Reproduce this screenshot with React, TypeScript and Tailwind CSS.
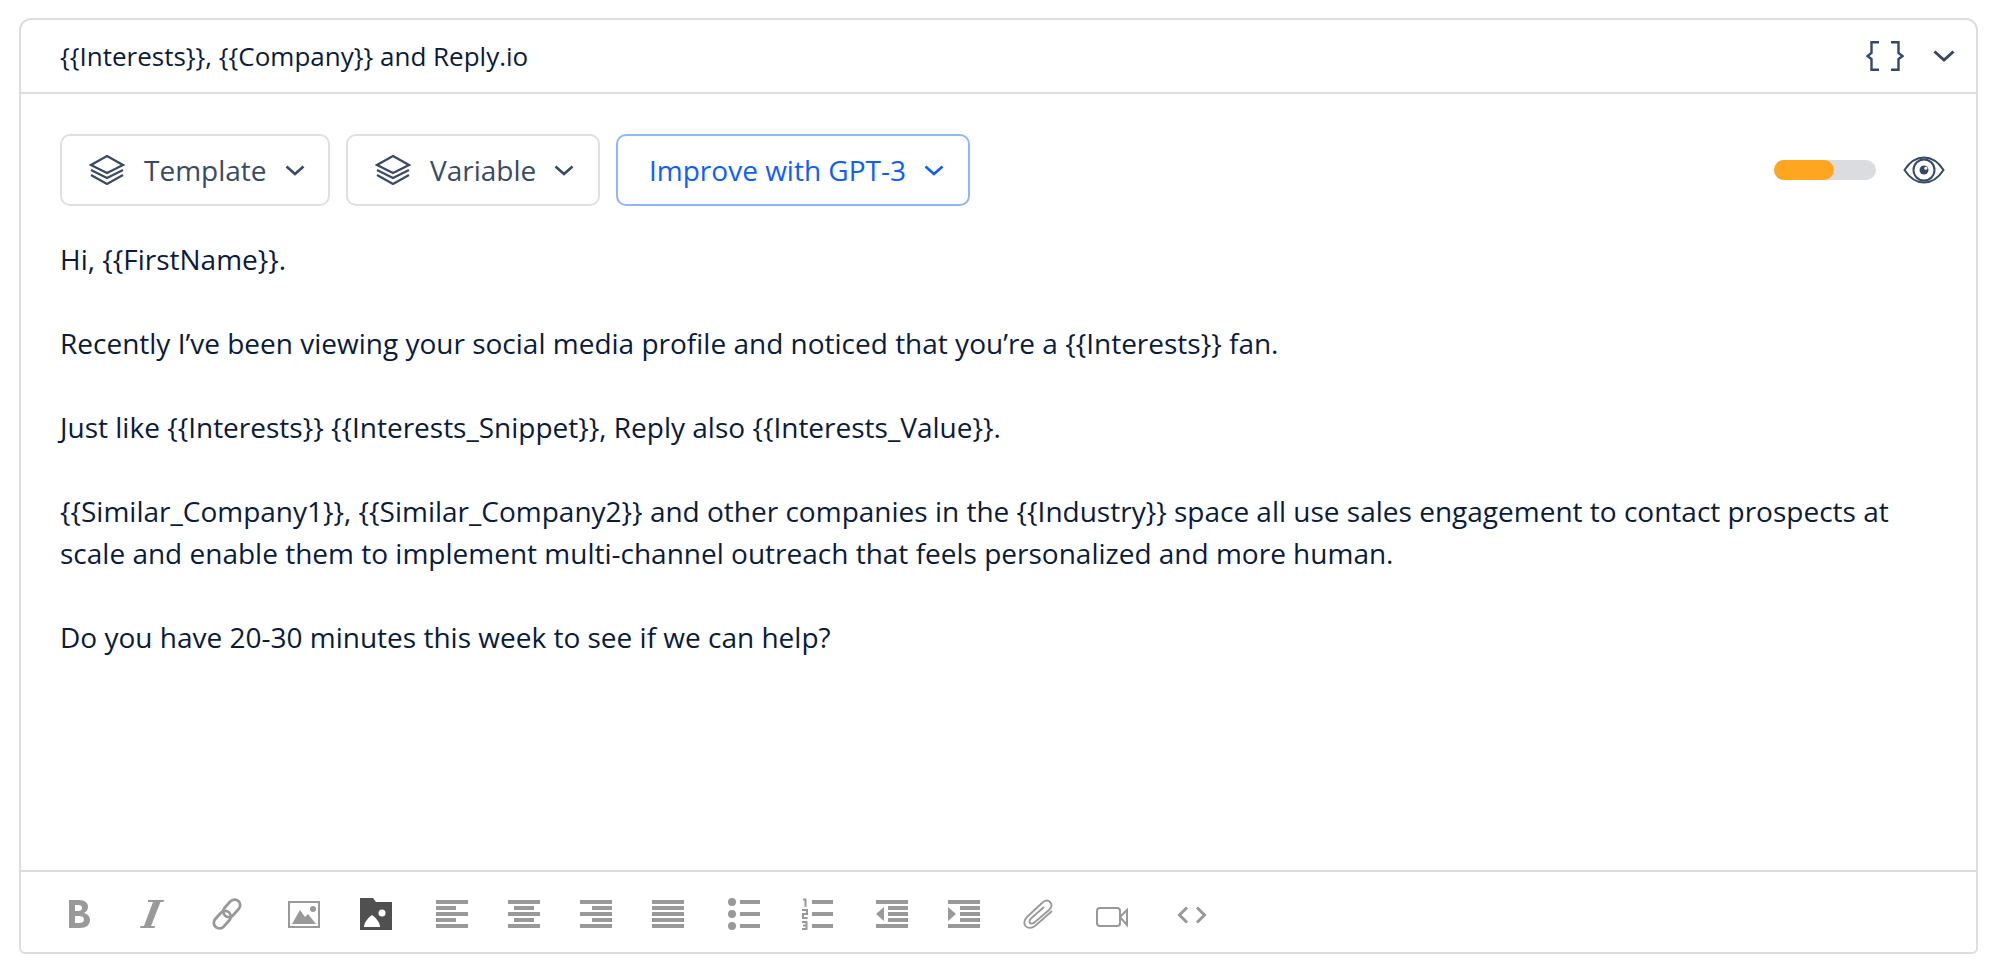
const TEXT_FONT = "font-['Open_Sans',sans-serif]";

function LayersIcon() {
  return (
    <svg width="36" height="30" viewBox="0 0 36 30" fill="none" stroke="currentColor" strokeWidth="2.2" className="shrink-0">
      <path d="M18 1 L34 10 L18 18 L2 10 Z" />
      <path d="M2 15 L18 23 L34 15" />
      <path d="M2 20 L18 29 L34 20" />
    </svg>
  );
}

function Chevron({ className = '' }: { className?: string }) {
  return (
    <svg width="22" height="12" viewBox="0 0 22 12" fill="none" stroke="currentColor" strokeWidth="3" className={className}>
      <path d="M1.5 1.5 L11 10 L20.5 1.5" />
    </svg>
  );
}

function SmallChevron({ className = '' }: { className?: string }) {
  return (
    <svg width="20" height="11" viewBox="0 0 20 11" fill="none" stroke="currentColor" strokeWidth="2.6" className={`shrink-0 ${className}`}>
      <path d="M1.5 1.5 L10 9 L18.5 1.5" />
    </svg>
  );
}

function Braces() {
  return (
    <svg width="38" height="30" viewBox="0 0 38 30" fill="none" stroke="currentColor" strokeWidth="2.4">
      <path d="M13 1.2 H5.500 V12 L1.500 15 L5.500 18 V28.800 H13" />
      <path d="M25 1.200 H32.500 V12 L36.500 15 L32.500 18 V28.800 H25" />
    </svg>
  );
}

function Eye() {
  return (
    <svg width="42" height="28" viewBox="0 0 42 28" fill="none" stroke="#354864" strokeWidth="2">
      <path d="M1.500 14 C8 4 14 1.500 21 1.500 C28 1.500 34 4 40.500 14 C34 24 28 26.500 21 26.500 C14 26.500 8 24 1.500 14 Z" />
      <circle cx="21" cy="14" r="10.500" />
      <circle cx="21" cy="14" r="4.500" fill="#354864" stroke="none" />
      <circle cx="22.800" cy="12.200" r="1.500" fill="#fff" stroke="none" />
    </svg>
  );
}

function Bars({ rows }: { rows: [number, number][] }) {
  return (
    <svg width="32" height="28" viewBox="0 0 32 28" fill="#999">
      {rows.map(([x, w], i) => (
        <rect key={i} x={x} y={i * 6} width={w} height="4" />
      ))}
    </svg>
  );
}

const ICONS: { ml: string; node: React.ReactNode }[] = [
  {
    ml: 'ml-0',
    node: (
      <svg width="32" height="32" viewBox="0 0 32 32" fill="#999">
        <path fillRule="evenodd" d="M6 2 H16 C22 2 25 5 25 9 C25 12 23 14 21 15 C24 16 27 18 27 22 C27 27 23 30 17 30 H6 Z M12 7 V13 H15 C18 13 19 12 19 10 C19 8 18 7 15 7 Z M12 18 V25 H16 C19 25 21 24 21 21.500 C21 19 19 18 16 18 Z" />
      </svg>
    ),
  },
  {
    ml: 'ml-[41px]',
    node: (
      <svg width="32" height="32" viewBox="0 0 32 32" fill="#999">
        <path d="M12 2 H28 L27.500 4 H24.500 L15 28 H19 L18.500 30 H4 L4.500 28 H8 L17 4 H12 Z" />
      </svg>
    ),
  },
  {
    ml: 'ml-[43px]',
    node: (
      <svg width="34" height="34" viewBox="0 0 34 34" fill="none" stroke="#999" strokeWidth="3">
        <rect x="16" y="0.500" width="12" height="21" rx="6" transform="rotate(42 22 11)" />
        <rect x="6" y="12.500" width="12" height="21" rx="6" transform="rotate(42 12 23)" />
      </svg>
    ),
  },
  {
    ml: 'ml-[45px]',
    node: (
      <svg width="32" height="32" viewBox="0 0 32 32">
        <rect x="1" y="4" width="30" height="25" fill="none" stroke="#999" strokeWidth="2" />
        <path d="M4 26 L12 12 L17 19 L20 16 L28 26 Z" fill="#999" />
        <circle cx="25" cy="11" r="3" fill="#999" />
      </svg>
    ),
  },
  {
    ml: 'ml-[40px]',
    node: (
      <svg width="32" height="32" viewBox="0 0 32 32">
        <path d="M0 0 H13 L16 4 H32 V32 H0 Z" fill="#505050" />
        <path d="M4 29 C4 24 9 19 12 17 C15 19 20 24 20 29 Z" fill="#fff" />
        <circle cx="22" cy="15" r="3.500" fill="#fff" />
      </svg>
    ),
  },
  { ml: 'ml-[44px]', node: <Bars rows={[[0, 32], [0, 20], [0, 32], [0, 20], [0, 32]]} /> },
  { ml: 'ml-[40px]', node: <Bars rows={[[0, 32], [6, 20], [0, 32], [6, 20], [0, 32]]} /> },
  { ml: 'ml-[40px]', node: <Bars rows={[[0, 32], [12, 20], [0, 32], [12, 20], [0, 32]]} /> },
  { ml: 'ml-[40px]', node: <Bars rows={[[0, 32], [0, 32], [0, 32], [0, 32], [0, 32]]} /> },
  {
    ml: 'ml-[44px]',
    node: (
      <svg width="32" height="32" viewBox="0 0 32 32" fill="#999">
        <circle cx="4" cy="4" r="4" />
        <circle cx="4" cy="16" r="4" />
        <circle cx="4" cy="28" r="4" />
        <rect x="12" y="2" width="20" height="4" />
        <rect x="12" y="14" width="20" height="4" />
        <rect x="12" y="26" width="20" height="4" />
      </svg>
    ),
  },
  {
    ml: 'ml-[41px]',
    node: (
      <svg width="32" height="32" viewBox="0 0 32 32" fill="none" stroke="#999" strokeWidth="2">
        <path d="M2 1.500 H4.500 V9" />
        <path d="M1 12 H6 V16 H2 V20 H6.500" />
        <path d="M1 24 H5.500 V31 H1 M2 27.500 H5.500" />
        <rect x="11" y="2" width="21" height="4" fill="#999" stroke="none" />
        <rect x="11" y="14" width="21" height="4" fill="#999" stroke="none" />
        <rect x="11" y="26" width="21" height="4" fill="#999" stroke="none" />
      </svg>
    ),
  },
  {
    ml: 'ml-[43px]',
    node: (
      <svg width="32" height="28" viewBox="0 0 32 28" fill="#999">
        <rect x="0" y="0" width="32" height="4" />
        <rect x="12" y="6" width="20" height="4" />
        <rect x="12" y="12" width="20" height="4" />
        <rect x="12" y="18" width="20" height="4" />
        <rect x="0" y="24" width="32" height="4" />
        <path d="M0 14 L8 7 V21 Z" />
      </svg>
    ),
  },
  {
    ml: 'ml-[40px]',
    node: (
      <svg width="32" height="28" viewBox="0 0 32 28" fill="#999">
        <rect x="0" y="0" width="32" height="4" />
        <rect x="12" y="6" width="20" height="4" />
        <rect x="12" y="12" width="20" height="4" />
        <rect x="12" y="18" width="20" height="4" />
        <rect x="0" y="24" width="32" height="4" />
        <path d="M8 14 L0 7 V21 Z" />
      </svg>
    ),
  },
  {
    ml: 'ml-[42px]',
    node: (
      <svg width="32" height="30" viewBox="0 0 32 30" fill="none" stroke="#999" strokeWidth="1.800">
        <path d="M30 12 L13 27 C9 30 5 29 3.500 27 C1.500 24 2 21 5 18 L20 4 C23 1 26 1 28 3 C30 5 30 8 27 11 L13 23 C11 25 9 25 8 24 C7 22.500 7.500 21 9 19.500 L22 8" />
      </svg>
    ),
  },
  {
    ml: 'ml-[42px]',
    node: (
      <svg width="32" height="32" viewBox="0 0 32 32" fill="none" stroke="#999" strokeWidth="2">
        <rect x="1" y="10" width="23" height="18" rx="3" />
        <path d="M24 19 L31 12 V27 Z" />
      </svg>
    ),
  },
  {
    ml: 'ml-[48px]',
    node: (
      <svg width="32" height="32" viewBox="0 0 32 32" fill="none" stroke="#999" strokeWidth="3">
        <path d="M11 9.500 L3.500 17 L11 24.500" />
        <path d="M21 9.500 L28.500 17 L21 24.500" />
      </svg>
    ),
  },
];

const LINES = [
  'Hi, {{FirstName}}.',
  '',
  'Recently I’ve been viewing your social media profile and noticed that you’re a {{Interests}} fan.',
  '',
  'Just like {{Interests}} {{Interests_Snippet}}, Reply also {{Interests_Value}}.',
  '',
  '{{Similar_Company1}}, {{Similar_Company2}} and other companies in the {{Industry}} space all use sales engagement to contact prospects at scale and enable them to implement multi-channel outreach that feels personalized and more human.',
  '',
  'Do you have 20-30 minutes this week to see if we can help?',
];

export default function App() {
  return (
    <div className={`min-h-[978px] w-[2004px] bg-white pt-[18px] pl-[19px] ${TEXT_FONT}`}>
      <div className="flex h-[936px] w-[1959px] flex-col rounded-t-[12px] rounded-b-[6px] border-2 border-[#dcdde2]">
        {/* Subject */}
        <div className="flex h-[74px] shrink-0 items-center justify-between border-b-2 border-[#dcdde2] pr-[21px] pl-[39px]">
          <span className="text-[26px] text-[#0b1b3a]">{'{{Interests}}, {{Company}} and Reply.io'}</span>
          <div className="flex items-center gap-[29px] text-[#354864]">
            <Braces />
            <Chevron />
          </div>
        </div>

        {/* Editor */}
        <div className="flex min-h-0 flex-1 flex-col pt-[40px] pr-[31px] pl-[39px]">
          <div className="flex items-center">
            <button className="flex h-[72px] w-[270px] items-center rounded-[10px] border-2 border-[#dfe0e4] pl-[27px] text-[28px] text-[#3a4a62]">
              <LayersIcon />
              <span className="ml-[19px]">Template</span>
              <SmallChevron className="ml-[18px]" />
            </button>
            <button className="ml-[16px] flex h-[72px] w-[254px] items-center rounded-[10px] border-2 border-[#dfe0e4] pl-[27px] text-[28px] text-[#3a4a62]">
              <LayersIcon />
              <span className="ml-[19px]">Variable</span>
              <SmallChevron className="ml-[18px]" />
            </button>
            <button className="ml-[16px] flex h-[72px] w-[354px] items-center rounded-[10px] border-2 border-[#8fb6fb] pl-[31px] text-[28px] text-[#0f5ef7]">
              <span>Improve with GPT-3</span>
              <SmallChevron className="ml-[18px]" />
            </button>
            <div className="ml-auto flex items-center">
              <div className="h-[20px] w-[102px] rounded-full bg-[#dbdcdf]">
                <div className="h-full w-[60px] rounded-full bg-[#fea620]" />
              </div>
              <div className="ml-[27px]">
                <Eye />
              </div>
            </div>
          </div>

          <div className="mt-[32px] text-[28px] leading-[42px] text-[#0b1b3a]">
            {LINES.map((line, i) => (
              <p key={i} className="min-h-[42px]">{line}</p>
            ))}
          </div>
        </div>

        {/* Toolbar */}
        <div className="flex h-[82px] shrink-0 items-center border-t-2 border-[#dcdde2] pt-[3px] pl-[42px]">
          {ICONS.map((icon, i) => (
            <div key={i} className={`flex w-[32px] shrink-0 items-center justify-center ${icon.ml}`}>
              {icon.node}
            </div>
          ))}
        </div>
      </div>
    </div>
  );
}
